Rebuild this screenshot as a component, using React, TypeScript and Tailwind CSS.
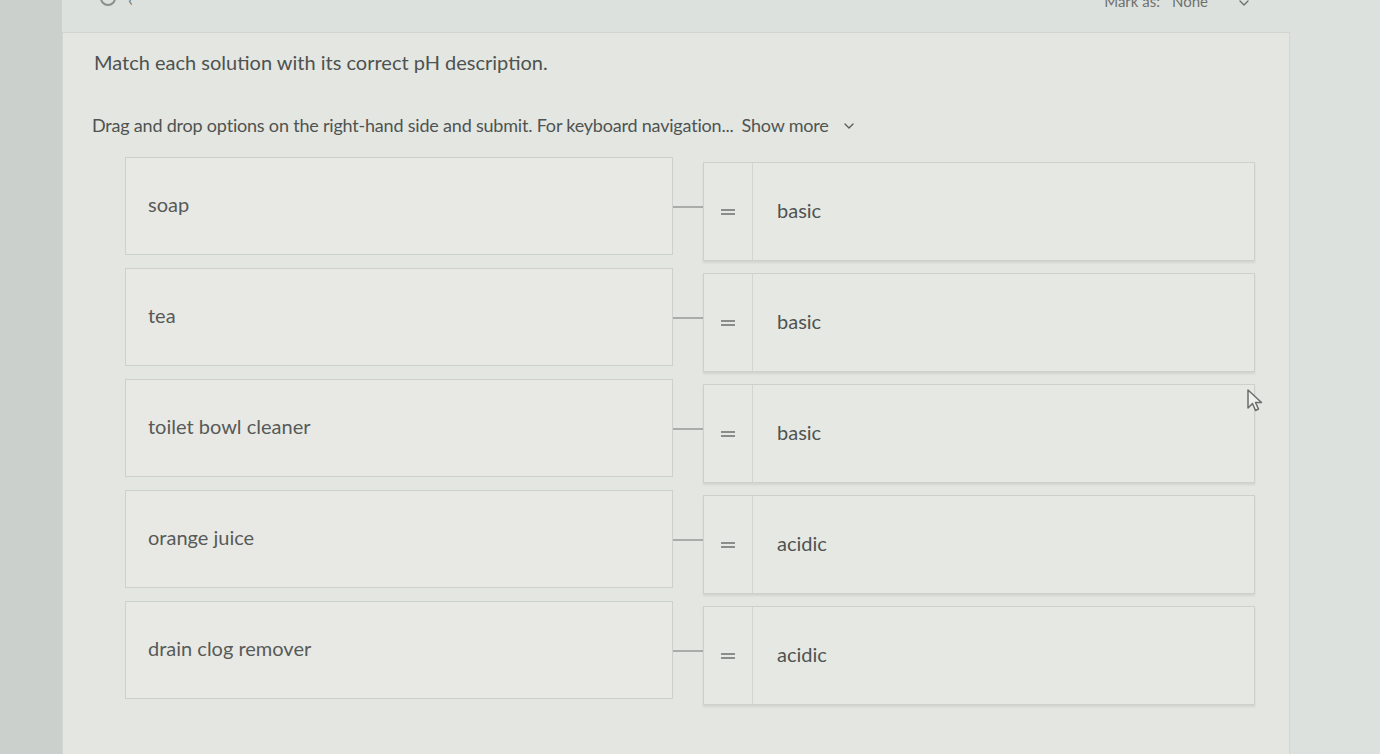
import { ChevronDown } from 'lucide-react';

const pairs = [
  { item: 'soap', match: 'basic' },
  { item: 'tea', match: 'basic' },
  { item: 'toilet bowl cleaner', match: 'basic' },
  { item: 'orange juice', match: 'acidic' },
  { item: 'drain clog remover', match: 'acidic' },
];

function GripIcon() {
  return (
    <svg width="14" height="8" viewBox="0 0 14 8" className="text-[#8a8e8a]">
      <rect x="0" y="1" width="14" height="2" fill="currentColor" />
      <rect x="0" y="5" width="14" height="2" fill="currentColor" />
    </svg>
  );
}

export default function App() {
  return (
    <div
      className="relative w-[1380px] h-[754px] overflow-hidden flex bg-[#dde1dd] text-[#575a58]"
      style={{ fontFamily: 'Lato, "Open Sans", sans-serif' }}
    >
      {/* left gutter */}
      <div className="w-[62px] shrink-0 bg-[#cbd0cc]" />

      <div className="flex-1 flex flex-col">
        {/* top bar, mostly scrolled off */}
        <div className="h-[42px] flex items-start justify-between pl-[38px] pr-[128px] -mt-[10px]">
          <div className="flex gap-3 text-[#777b78]">
            <span className="w-[16px] h-[16px] rounded-full border-2 border-[#8a8e8a]" />
            <span className="text-[18px] leading-none">&lsaquo;</span>
          </div>
          <div className="flex items-center gap-3 text-[15px] text-[#6d716e]">
            <span>Mark as:</span>
            <span>None</span>
            <ChevronDown className="w-4 h-4 ml-4 mt-1" strokeWidth={2} />
          </div>
        </div>

        {/* question panel */}
        <div className="flex-1 border-t border-l border-r border-[#d2d6d1] bg-[#e3e6e1] mr-[90px] pl-[31px] pt-[14px]">
          <h1 className="text-[20px] text-[#4e5250]">
            Match each solution with its correct pH description.
          </h1>
          <p className="text-[18px] text-[#4f5351] mt-[35px] flex items-center tracking-[-0.2px] -ml-[2px]">
            Drag and drop options on the right-hand side and submit. For keyboard navigation...
            <span className="ml-2 text-[#505452]">Show more</span>
            <ChevronDown className="w-4 h-4 ml-3 text-[#5b5f5c]" strokeWidth={2} />
          </p>

          <div className="mt-[18px] ml-[31px] flex flex-col gap-[7px]">
            {pairs.map((p, idx) => (
              <div key={idx} className="flex items-start">
                {/* prompt box */}
                <div className="w-[548px] h-[98px] border border-[#cdd1cc] bg-[#e8e9e5] flex items-center pl-[22px] pb-[4px]">
                  <span className="text-[20px]">{p.item}</span>
                </div>
                {/* connector */}
                <div className="w-[30px] h-[2px] bg-[#a9ada9] mt-[49px]" />
                {/* draggable answer */}
                <div className="w-[552px] h-[99px] mt-[5px] border border-[#cdd1cc] bg-[#e6e8e4] shadow-[0_2px_2px_rgba(0,0,0,0.08)] flex">
                  <div className="w-[49px] border-r border-[#d2d5d0] flex items-center justify-center">
                    <GripIcon />
                  </div>
                  <div className="flex items-center pl-[24px] pb-[4px]">
                    <span className="text-[20px] text-[#4f5351]">{p.match}</span>
                  </div>
                </div>
              </div>
            ))}
          </div>
        </div>
      </div>

      {/* mouse pointer */}
      <svg
        className="absolute left-[1246px] top-[388px]"
        width="20"
        height="26"
        viewBox="0 0 20 26"
      >
        <path
          d="M2 2 L2 20 L6.5 15.5 L9.5 22.5 L12.5 21 L9.5 14.5 L15.5 14.5 Z"
          fill="#eef0ec"
          stroke="#6b6f6c"
          strokeWidth="1.5"
          strokeLinejoin="round"
        />
      </svg>
    </div>
  );
}
